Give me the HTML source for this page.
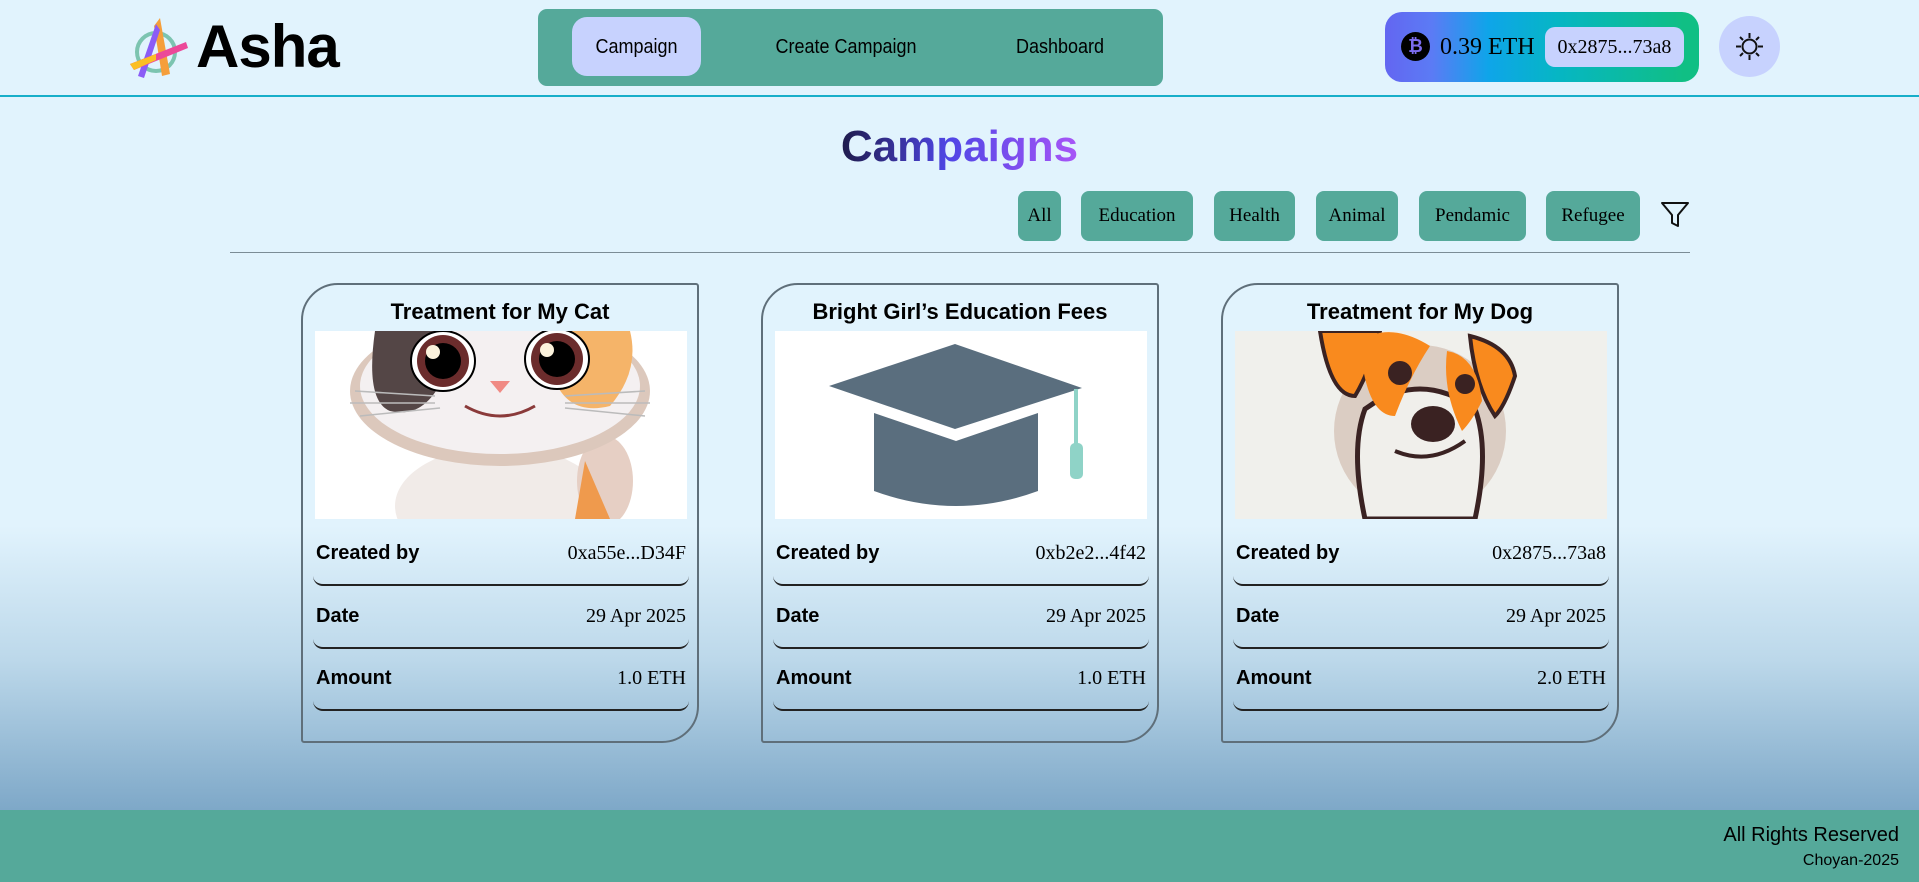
<!DOCTYPE html>
<html><head><meta charset="utf-8">
<style>
*{margin:0;padding:0;box-sizing:border-box}
html,body{width:1919px;height:882px;overflow:hidden}
body{position:relative;font-family:"Liberation Sans",sans-serif;color:#000;
background:linear-gradient(180deg,#e1f3fd 0px,#e1f3fd 526px,#bcd8ea 660px,#7ea8c8 810px);}
.abs{position:absolute}
.hdrline{left:0;top:95px;width:1919px;height:2px;background:#17aec9}
.nav{left:538px;top:9px;width:625px;height:77px;background:#55a99a;border-radius:9px}
.nav span{position:absolute;top:0;height:77px;line-height:77px;font-size:20px;font-family:"Liberation Sans",sans-serif;transform:scaleX(.9)}
.wallet{left:1385px;top:12px;width:314px;height:70px;border-radius:17px;
background:linear-gradient(90deg,#6366f1 0%,#5b7bf5 15%,#0ea5e9 33%,#06b6c4 55%,#10bf84 95%)}
.theme{left:1719px;top:16px;width:61px;height:61px;border-radius:50%;background:#c7d2fe}
.title{left:0;width:1919px;top:122px;text-align:center;font-size:44px;font-weight:bold}
.title span{background:linear-gradient(90deg,#1e1b4b,#4f46e5 45%,#a855f7);-webkit-background-clip:text;background-clip:text;color:transparent}
.fb{position:absolute;top:191px;height:50px;line-height:50px;background:#55a99a;border-radius:8px;text-align:center;font-size:19px;font-family:"Liberation Serif",serif}
.hr{left:230px;top:252px;width:1460px;height:1px;background:#7b8c96}
.card{position:absolute;top:283px;width:398px;height:460px;border:2px solid #5f6f7a;border-radius:37px 3px 37px 3px}
.card h3{position:absolute;top:14px;left:0;width:100%;text-align:center;font-size:22px;font-weight:bold}
.card svg{position:absolute;left:12px;top:46px}
.row{position:absolute;left:10px;width:376px;height:44px;border-bottom:2px solid #222;border-radius:0 0 10px 10px}
.row b{position:absolute;left:3px;top:0;font-size:20px}
.row i{position:absolute;right:3px;top:0;font-style:normal;font-size:20px;font-family:"Liberation Serif",serif}
.footer{left:0;top:810px;width:1919px;height:72px;background:#55a99a}
</style></head><body>
<div class="abs hdrline"></div>
<svg class="abs" style="left:126px;top:16px" width="66" height="64" viewBox="0 0 66 64">
<circle cx="30" cy="36" r="19" fill="none" stroke="#7cc4b0" stroke-width="4"/>
<path d="M34 2 L44 58 L36 60 L28 10Z" fill="#f59e3b"/>
<path d="M30 8 L12 60 L18 62 L34 14Z" fill="#8b5cf6"/>
<path d="M4 48 L60 26 L62 32 L8 54Z" fill="#ec4899"/>
<path d="M4 48 L30 38 L30 44 L8 54Z" fill="#fbbf24"/>
</svg>
<div class="abs" style="left:196px;top:12px;font-size:60px;font-weight:bold;letter-spacing:-1px">Asha</div>
<div class="abs nav">
<div class="abs" style="left:34px;top:8px;width:129px;height:59px;background:#c7d2fe;border-radius:15px"></div>
<span style="left:34px;width:129px;text-align:center">Campaign</span>
<span style="left:208px;width:200px;text-align:center">Create Campaign</span>
<span style="left:462px;width:120px;text-align:center">Dashboard</span>
</div>
<div class="abs wallet">
<div class="abs" style="left:16px;top:20px;width:29px;height:29px;border-radius:50%;background:#000;color:#7c6cf0;font-size:18px;font-weight:bold;text-align:center;line-height:29px">₿</div>
<div class="abs" style="left:55px;top:22px;font-size:24px;font-family:'Liberation Serif',serif">0.39 ETH</div>
<div class="abs" style="left:160px;top:15px;width:139px;height:40px;border-radius:10px;background:#c7d2fe;text-align:center;line-height:40px;font-size:20px;font-family:'Liberation Serif',serif">0x2875...73a8</div>
</div>
<div class="abs theme">
<svg width="61" height="61" viewBox="0 0 61 61"><g stroke="#111" stroke-width="2" fill="none"><circle cx="30.5" cy="30.5" r="7"/><path d="M30.5 17v5M30.5 39v5M17 30.5h5M39 30.5h5M21 21l3 3M37 37l3 3M21 40l3-3M37 24l3-3"/></g></svg>
</div>
<div class="abs title"><span>Campaigns</span></div>
<div class="fb" style="left:1018px;width:43px">All</div>
<div class="fb" style="left:1081px;width:112px">Education</div>
<div class="fb" style="left:1214px;width:81px">Health</div>
<div class="fb" style="left:1316px;width:82px">Animal</div>
<div class="fb" style="left:1419px;width:107px">Pendamic</div>
<div class="fb" style="left:1546px;width:94px">Refugee</div>
<svg class="abs" style="left:1660px;top:200px" width="30" height="30" viewBox="0 0 30 30"><path d="M2 3h26L18 15v11l-6-3v-8Z" fill="none" stroke="#111" stroke-width="2" stroke-linejoin="round"/></svg>
<div class="abs hr"></div>

<div class="card" style="left:301px">
<h3>Treatment for My Cat</h3>
<svg width="372" height="188" viewBox="0 0 372 188"><rect width="372" height="188" fill="#fff"/>
<ellipse cx="185" cy="175" rx="105" ry="60" fill="#f1ebe8"/>
<ellipse cx="290" cy="150" rx="28" ry="45" fill="#e6cfc4"/>
<path d="M270 130 l25 58 h-35z" fill="#ef9a4d"/>
<ellipse cx="185" cy="60" rx="150" ry="75" fill="#dcc8bc"/>
<ellipse cx="185" cy="55" rx="140" ry="68" fill="#f4f0f1"/>
<path d="M60 0 h75 v30 q-20 60 -60 50 q-25 -10 -15 -80z" fill="#544646"/>
<path d="M240 0 h75 q10 40 -20 75 q-40 10 -55 -25z" fill="#f5b469"/>
<ellipse cx="128" cy="30" rx="32" ry="30" fill="#fff" stroke="#000" stroke-width="2"/>
<circle cx="128" cy="30" r="26" fill="#6b2c2c"/><circle cx="128" cy="30" r="18" fill="#000"/><circle cx="118" cy="21" r="7" fill="#fbf2dc"/>
<ellipse cx="242" cy="28" rx="32" ry="30" fill="#fff" stroke="#000" stroke-width="2"/>
<circle cx="242" cy="28" r="26" fill="#6b2c2c"/><circle cx="242" cy="28" r="18" fill="#000"/><circle cx="232" cy="19" r="7" fill="#fbf2dc"/>
<path d="M175 50 h20 l-10 12z" fill="#f08a84"/>
<path d="M150 75 q35 20 70 0" fill="none" stroke="#8a3a3a" stroke-width="3"/>
<g stroke="#bbb" stroke-width="1.5"><path d="M40 60l80 5M35 72l85 0M45 85l80-8M250 65l80-5M250 72l85 0M250 77l80 8"/></g>
</svg>
<div class="row" style="top:257px"><b>Created by</b><i>0xa55e...D34F</i></div>
<div class="row" style="top:320px"><b>Date</b><i>29 Apr 2025</i></div>
<div class="row" style="top:382px"><b>Amount</b><i>1.0 ETH</i></div>
</div>

<div class="card" style="left:761px">
<h3>Bright Girl’s Education Fees</h3>
<svg width="372" height="188" viewBox="0 0 372 188"><rect width="372" height="188" fill="#fff"/>
<path d="M99 82 v78 q82 30 164 0 v-78 l-82 28z" fill="#5a6e7e"/>
<path d="M54 55 L180 13 L307 57 L180 98Z" fill="#5a6e7e"/>
<path d="M301 58 v60" stroke="#8fd3c7" stroke-width="4"/>
<rect x="295" y="112" width="13" height="36" rx="5" fill="#8fd3c7"/>
</svg>
<div class="row" style="top:257px"><b>Created by</b><i>0xb2e2...4f42</i></div>
<div class="row" style="top:320px"><b>Date</b><i>29 Apr 2025</i></div>
<div class="row" style="top:382px"><b>Amount</b><i>1.0 ETH</i></div>
</div>

<div class="card" style="left:1221px">
<h3>Treatment for My Dog</h3>
<svg width="372" height="188" viewBox="0 0 372 188"><rect width="372" height="188" fill="#f0f0ec"/>
<circle cx="185" cy="100" r="86" fill="#dbcdc3"/>
<path d="M130 188 q-15 -70 0 -110 q55 -40 110 0 q15 40 0 110z" fill="#f0efeb" stroke="#3a2222" stroke-width="5"/>
<path d="M85 0 h60 q-10 40 -25 65 q-25 0 -35 -65z" fill="#f98a1e" stroke="#3a2222" stroke-width="4"/>
<path d="M235 5 q40 10 45 40 q-10 30 -20 40 q-20 -30 -25 -80z" fill="#f98a1e" stroke="#3a2222" stroke-width="4"/>
<path d="M125 10 q30 -20 70 5 q-20 30 -35 70 q-30 0 -35 -75z" fill="#f98a1e"/>
<path d="M212 20 q30 5 35 50 q-10 20 -20 30 q-20 -40 -15 -80z" fill="#f98a1e"/>
<circle cx="165" cy="42" r="12" fill="#3a2222"/><circle cx="230" cy="53" r="10" fill="#3a2222"/>
<ellipse cx="198" cy="93" rx="22" ry="18" fill="#3a2222"/>
<path d="M160 120 q35 15 70 -10" fill="none" stroke="#3a2222" stroke-width="4"/>
</svg>
<div class="row" style="top:257px"><b>Created by</b><i>0x2875...73a8</i></div>
<div class="row" style="top:320px"><b>Date</b><i>29 Apr 2025</i></div>
<div class="row" style="top:382px"><b>Amount</b><i>2.0 ETH</i></div>
</div>

<div class="abs footer">
<div class="abs" style="right:20px;top:14px;font-size:20px">All Rights Reserved</div>
<div class="abs" style="right:20px;top:42px;font-size:16px">Choyan-2025</div>
</div>
</body></html>
